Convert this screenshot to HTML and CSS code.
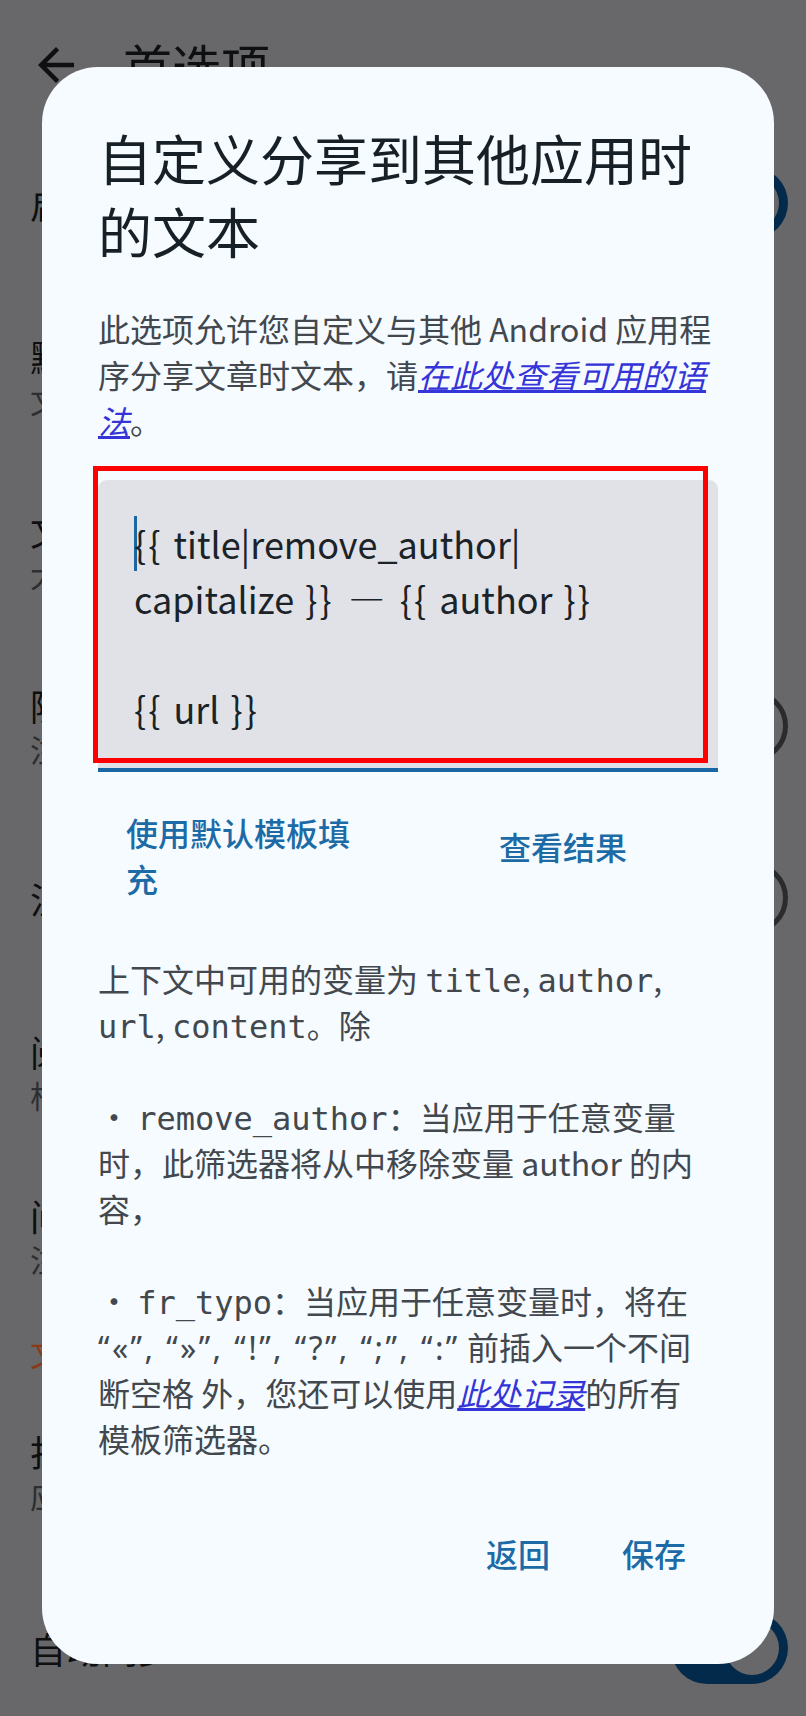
FILE: index.html
```html
<!DOCTYPE html>
<html lang="zh-CN">
<head>
<meta charset="utf-8">
<title>首选项</title>
<link rel="stylesheet" href="styles.css">
</head>
<body>
<div class="page">
  <header class="appbar">
    <svg class="back" viewBox="0 0 24 24"><path d="M20 11H7.83l5.59-5.59L12 4l-8 8 8 8 1.41-1.41L7.83 13H20v-2z"/></svg>
    <span class="appbar-title">首选项</span>
  </header>
  <div class="row"><div class="texts"><div class="t">启用深色主题</div></div><span class="switch on"></span></div>
  <div class="row"><div class="texts"><div class="t">默认字体大小</div><div class="s">文章正文字号</div></div></div>
  <div class="row"><div class="texts"><div class="t">文章宽度</div><div class="s">大</div></div></div>
  <div class="row"><div class="texts"><div class="t">隐藏已读文章</div><div class="s">注释</div></div><span class="switch off"></span></div>
  <div class="row"><div class="texts"><div class="t">注释高亮</div></div><span class="switch off"></span></div>
  <div class="row"><div class="texts"><div class="t">阅读进度</div><div class="s">根据滚动位置保存</div></div></div>
  <div class="row"><div class="texts"><div class="t">间距</div><div class="s">注意</div></div></div>
  <div class="section">文章</div>
  <div class="row"><div class="texts"><div class="t">打开链接方式</div><div class="s">应用内浏览器</div></div></div>
  <div class="row"><div class="texts"><div class="t">自动同步</div></div><span class="switch on"></span></div>
</div>

<div class="dialog">
  <h1 class="d-title">自定义分享到其他应用时的文本</h1>
  <p class="d-text">此选项允许您自定义与其他 Android 应用程序分享文章时文本，请<a class="link">在此处查看可用的语法</a>。</p>
  <div class="field-wrap">
    <div class="field"><span class="caret"></span><span class="br">{{</span> title|remove_author|<br>capitalize <span class="br">}}</span> <span class="dash">—</span> <span class="br">{{</span> author <span class="br">}}</span><br><br><span class="br">{{</span> url <span class="br">}}</span></div>
    <div class="mark"></div>
  </div>
  <div class="btn-row">
    <span class="tbtn">使用默认模板填充</span>
    <span class="tbtn right">查看结果</span>
  </div>
  <p class="d-text vars">上下文中可用的变量为 <span class="mono">title</span>, <span class="mono">author</span>, <span class="mono">url</span>, <span class="mono">content</span>。除<br><br>• <span class="mono">remove_author</span>：当应用于任意变量时，此筛选器将从中移除变量 author 的内容，<br><br>• <span class="mono">fr_typo</span>：当应用于任意变量时，将在<span class="latin">“«”, “»”, “!”, “?”, “;”, “:”</span> 前插入一个不间断空格 外，您还可以使用<a class="link">此处记录</a>的所有<br>模板筛选器。</p>
  <div class="actions">
    <span class="abtn">返回</span>
    <span class="abtn">保存</span>
  </div>
</div>
</body>
</html>
```

FILE: styles.css
```css
* { box-sizing: border-box; margin: 0; padding: 0; }

html, body {
  width: 806px;
  height: 1716px;
  overflow: hidden;
}

body {
  position: relative;
  background: #68686a;
  font-family: "Noto Sans CJK SC", "Noto Sans", sans-serif;
  color: #0d0f11;
}

/* ---------- dimmed page behind the dialog ---------- */
.page {
  display: grid;
  grid-template-rows: 130px 146px 202px 146px 204px 140px 208px 120px 112px 128px 224px;
}

.appbar {
  display: flex;
  align-items: center;
  gap: 40px;
  padding-left: 29px;
}

.back {
  width: 54px;
  height: 54px;
  fill: #0d0f11;
  flex: none;
}

.appbar-title {
  font-size: 49px;
  line-height: 60px;
}

.row {
  display: flex;
  align-items: center;
  justify-content: space-between;
  padding: 0 18px 0 30px;
}

.t {
  font-size: 36px;
  line-height: 46px;
  color: #0d0f11;
}

.s {
  font-size: 31px;
  line-height: 42px;
  color: #2c2e30;
}

.section {
  display: flex;
  align-items: center;
  padding-left: 30px;
  font-size: 32px;
  color: #8a3a17;
}

.switch {
  position: relative;
  flex: none;
  width: 117px;
  height: 72px;
  border-radius: 36px;
}

.switch.on { background: #032a4a; }

.switch.on::after {
  content: "";
  position: absolute;
  right: 9px;
  top: 9px;
  width: 54px;
  height: 54px;
  border-radius: 50%;
  background: #68686a;
}

.switch.off { border: 5px solid #2a2b2d; }

.switch.off::after {
  content: "";
  position: absolute;
  left: 13px;
  top: 13px;
  width: 36px;
  height: 36px;
  border-radius: 50%;
  background: #2a2b2d;
}

/* ---------- dialog ---------- */
.dialog {
  position: absolute;
  left: 42px;
  top: 67px;
  width: 732px;
  height: 1597px;
  background: #f5fbff;
  border-radius: 56px;
  padding: 54px 56px 0;
}

.d-title {
  font-size: 54px;
  line-height: 73px;
  font-weight: 400;
  color: #172026;
}

.d-text {
  margin-top: 38px;
  font-size: 32px;
  line-height: 46px;
  color: #42484e;
}

.link {
  color: #3434d8;
  font-style: italic;
  text-decoration: underline;
}

.field-wrap {
  position: relative;
  margin-top: 37px;
}

.field {
  background: #e0e2e7;
  border-radius: 9px 9px 0 0;
  border-bottom: 4px solid #1b67a3;
  padding: 36px 36px 32px;
  font-size: 36px;
  line-height: 55px;
  word-spacing: 3px;
  color: #1b2328;
}

.br {
  letter-spacing: 2px;
}

.dash {
  padding: 0 4px;
}

.caret {
  display: inline-block;
  width: 3px;
  height: 55px;
  margin-right: -3px;
  vertical-align: top;
  background: #1b67a3;
}

.mark {
  position: absolute;
  left: -5px;
  top: -14px;
  width: 615px;
  height: 297px;
  border: 5px solid #ff0000;
}

.btn-row {
  display: grid;
  grid-template-columns: 1fr 1fr;
  align-items: center;
  margin-top: 37px;
}

.tbtn {
  padding: 0 28px;
  font-size: 32px;
  line-height: 46px;
  font-weight: 500;
  color: #1d6ba6;
}

.tbtn.right {
  text-align: center;
  margin-bottom: 18px;
}

.d-text.vars { margin-top: 54px; }

.mono {
  font-family: "DejaVu Sans Mono", monospace;
  line-height: 1;
}

.latin {
  font-family: "Noto Sans", sans-serif;
  letter-spacing: 2.4px;
  line-height: 1;
}

.actions {
  display: flex;
  justify-content: flex-end;
  gap: 18px;
  margin-top: 47px;
  padding-right: 5px;
}

.abtn {
  padding: 22px 27px;
  font-size: 32px;
  line-height: 46px;
  font-weight: 500;
  color: #1d6ba6;
}
```
